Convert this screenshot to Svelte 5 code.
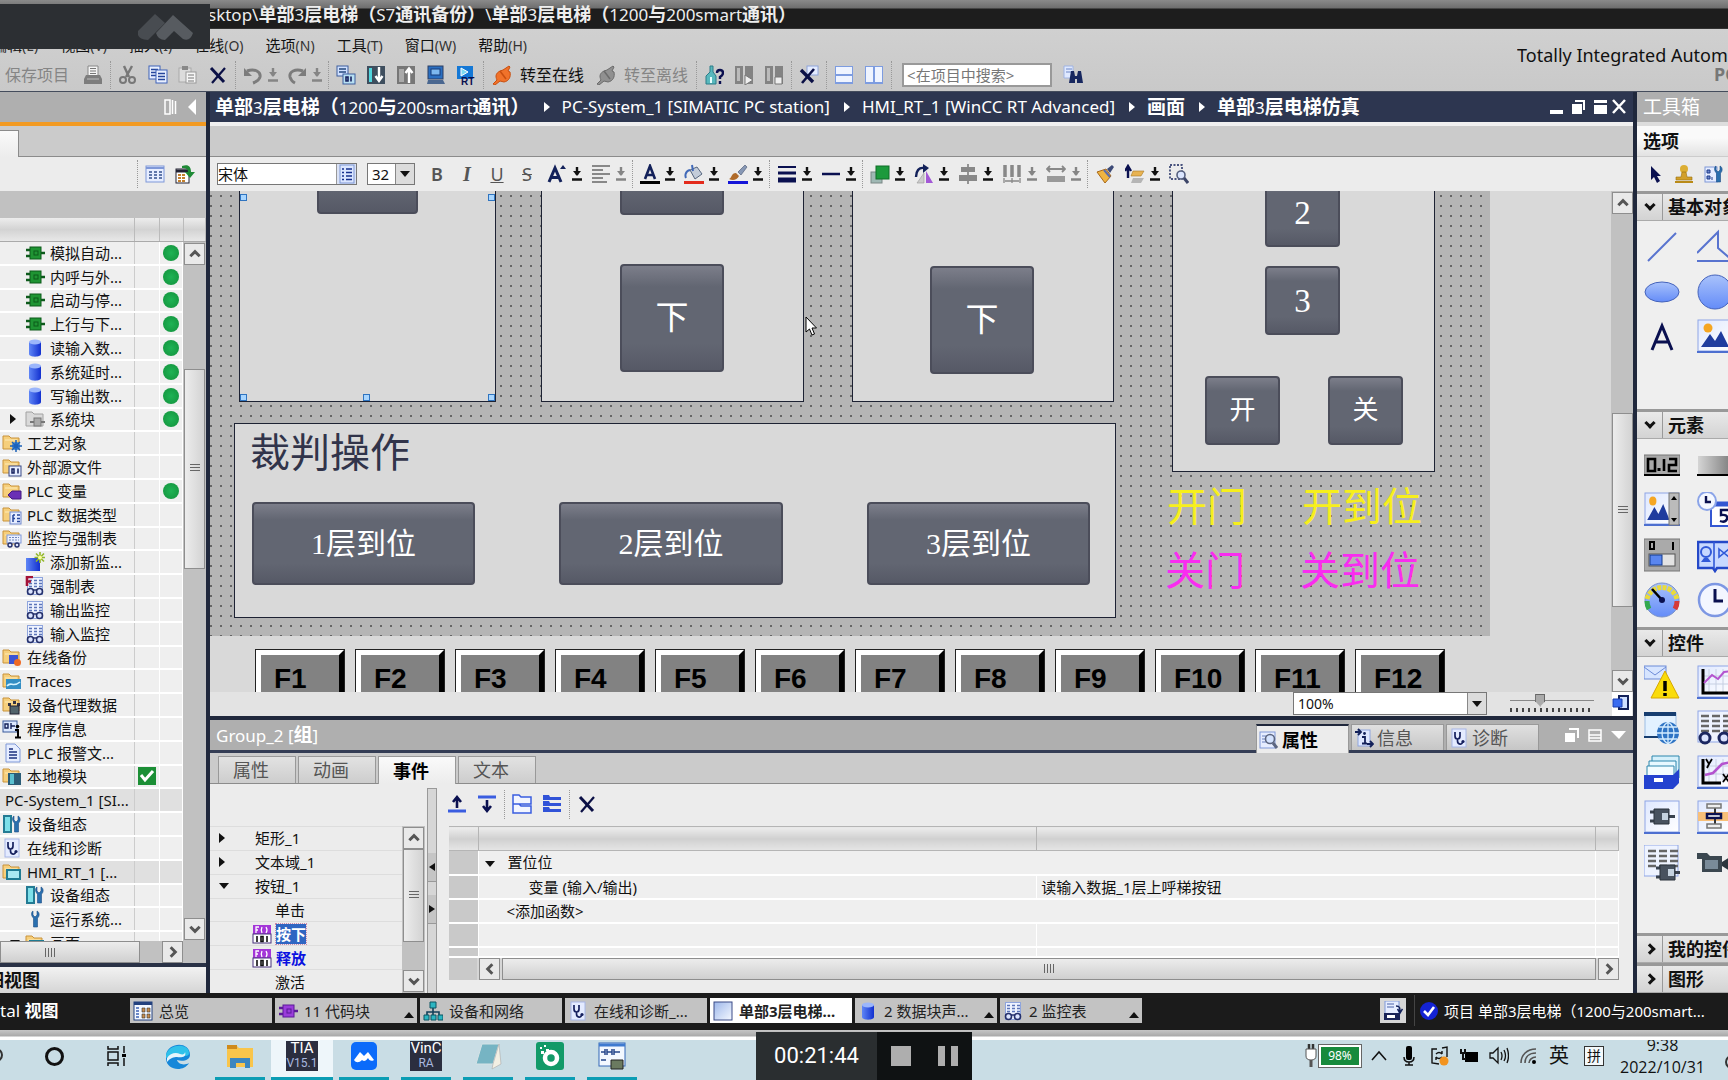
<script lang="ts">
  const folder = '<path d="M1 3h6l2 2h8v11H1z" fill="#f6cf7c" stroke="#c9933a"/><path d="M3 7h12" stroke="#fdebb8"/>';
  const sheet = '<rect x="2.5" y="1.5" width="15" height="17" fill="#eef3ff" stroke="#8fa5dd"/>';
  const glasses = '<path d="M2 14h16" stroke="#25306b" stroke-width="1.5"/><g fill="#dbe4ff" stroke="#25306b" stroke-width="1.6"><circle cx="5.5" cy="15.5" r="3"/><circle cx="14.5" cy="15.5" r="3"/></g>';
  const gridLines = '<path d="M4 4.5h3m2 0h3m2 0h3M4 7.5h3m2 0h3m2 0h3M4 10.5h3m2 0h3m2 0h3" stroke="#5b74b8" stroke-width="1.5"/>';
  const wrench = '<path d="M12 2v4l2 2 2-2V2c2.500 1 3 5 .5 7v9h-4V9C10 7 10 3 12 2z" fill="#2a6fae" stroke="#1d4e86" stroke-width=".6"/>';
  const stetho = '<rect x="3" y="1" width="14" height="18" fill="#e4ebff" stroke="#a7b6e6"/><path d="M6 4v4c0 4 5 4 5 0V4M8.500 11v2c0 4 5 4 5 1" fill="none" stroke="#16205e" stroke-width="1.7"/><circle cx="14" cy="13.500" r="1.600" fill="#16205e"/>';
  const db = '<path d="M4 4v12c0 3.500 12 3.500 12 0V4z" fill="url(#blue)"/><ellipse cx="10" cy="4" rx="6" ry="2.600" fill="#9bb6fb"/>';
  const chip = (a: string, b: string) => `<path d="M1 7h4M1 13h4M15 10h5" stroke="${b}" stroke-width="2.500"/><rect x="5" y="4" width="11" height="12" fill="${a}" stroke="${b}"/><rect x="9" y="8" width="4" height="4" fill="${a}" stroke="${b}"/>`;
  const pageI = (x: number, y: number) => `<rect x="${x}" y="${y}" width="11" height="13" fill="#e9f0ff" stroke="#3f62b8"/><path d="M${x + 2} ${y + 3.500}h7M${x + 2} ${y + 6.500}h7M${x + 2} ${y + 9.500}h7" stroke="#26469c" stroke-width="1.300"/>`;
  const plug = (a: string, b: string) => `<path d="M1 19l4-4c-2-4-1-7 3-9l3-1 6-4 1 1-2 4 2 1c1 5-1 9-6 10l-4-1-5 4z" fill="${a}" stroke="${b}"/><path d="M8 6l6 8" stroke="${b}" stroke-width="1.500"/>`;

  const icons: Record<string, string> = {
    print: '<path d="M5 1h10v10H5z" fill="#f4f4f4" stroke="#888"/><path d="M7 3.500h6M7 6h6M7 8.500h6" stroke="#777"/><path d="M3 10h14l2 4v5H1v-5z" fill="#7d7d7d"/><path d="M4 14h12" stroke="#bbb"/>',
    cut: '<path d="M6 1l5 11M14 1L8 12" stroke="#777" stroke-width="2.400"/><g fill="none" stroke="#777" stroke-width="2"><circle cx="5" cy="15" r="3"/><circle cx="14" cy="15" r="3"/></g>',
    copy: pageI(1, 1) + pageI(8, 5),
    paste: '<rect x="1" y="3" width="12" height="14" fill="#dcdcdc" stroke="#aaa"/><rect x="4" y="1" width="6" height="4" fill="#888"/><rect x="8" y="7" width="10" height="11" fill="#f6f6f6" stroke="#999"/><path d="M10 10h6M10 13h6M10 16h6" stroke="#777"/>',
    x: '<path d="M3 3l13 14" stroke="#0a0f45" stroke-width="3"/><path d="M17 3L4 18" stroke="#0a0f45" stroke-width="2.200"/>',
    undo: '<path d="M4 6c8-3 14 1 13 6-1 4-4 5-7 6" fill="none" stroke="#7c7c7c" stroke-width="3"/><path d="M1 3v8h8z" fill="#7c7c7c"/>',
    redo: '<path d="M16 6C8 3 2 7 3 12c1 4 3 5 5 6" fill="none" stroke="#7c7c7c" stroke-width="3"/><path d="M19 3v8h-8z" fill="#7c7c7c"/>',
    compile: '<rect x="1" y="1" width="11" height="10" fill="#cfe0ff" stroke="#3e5f9e"/><path d="M3 4h7M3 7h7" stroke="#24477e" stroke-width="1.500"/><rect x="7" y="9" width="12" height="10" fill="#b7dff2" stroke="#3e5f9e"/><path d="M10 12v4h2v-4zM15 11.500v5" fill="none" stroke="#16205e" stroke-width="1.600"/>',
    download: '<rect x="1" y="1" width="18" height="18" fill="#3e4e5e"/><path d="M3 3h3v14H3z" fill="#52d6de"/><path d="M13 2v13M9.500 11l3.500 5 3.500-5" fill="none" stroke="#fff" stroke-width="2.400"/>',
    upload: '<rect x="1" y="1" width="18" height="18" fill="#777"/><path d="M3 4h5v13H3z" fill="#aaa"/><path d="M13 18V5M9.500 8L13 3.500 16.500 8" fill="none" stroke="#fff" stroke-width="2.400"/>',
    pc: '<rect x="2" y="1" width="15" height="13" fill="#2a6fc1" stroke="#2c3f63"/><rect x="5" y="4" width="9" height="6" fill="#7db8ef" stroke="#173a78"/><path d="M2 15h15l2 4H1z" fill="#4a6790"/>',
    rt: '<rect x="1" y="1" width="16" height="13" fill="#1478d6"/><path d="M5 3l7 4-7 4z" fill="#7cd9f0" stroke="#fff"/><text x="5" y="19.500" font-family="Liberation Sans" font-size="10" font-weight="700" fill="#0b1050">RT</text>',
    online: plug('#f0722a', '#c84f10'),
    offline: plug('#909090', '#6b6b6b'),
    access: '<path d="M6 1h3v6l3 4v8H2v-8l4-4z" fill="#58b8bd" stroke="#2c7c88"/><path d="M7 12v6" stroke="#e6ffff" stroke-width="2"/><path d="M13 8q0-3 3-3 3 0 3 3 0 2-3 4v2M16 16v3" fill="none" stroke="#0b1050" stroke-width="2.400"/>',
    start: '<path d="M1 1h8v18H1zM11 1h8v18h-8z" fill="#838383"/><path d="M3 3h3v13H3z" fill="#bbb"/><path d="M11 10l8 5-8 5z" fill="#eee" stroke="#777"/>',
    stop: '<path d="M1 1h8v18H1zM11 1h8v18h-8z" fill="#838383"/><path d="M3 3h3v13H3z" fill="#bbb"/><path d="M11 12h7v7h-7z" fill="#eee" stroke="#777"/>',
    cross: '<rect x="8" y="1" width="11" height="9" fill="#e3ebff" stroke="#8ea4da"/><path d="M2 5l12 12" stroke="#0a0f45" stroke-width="3.400"/><path d="M15 4L3 18" stroke="#0a0f45" stroke-width="2.600"/>',
    splitH: '<rect x="1" y="1" width="18" height="18" fill="#7d9ce0"/><path d="M2 2h16v7H2zM2 11h16v6H2z" fill="#eff4ff"/>',
    splitV: '<rect x="1" y="1" width="18" height="18" fill="#7d9ce0"/><path d="M2 2h7v15H2zM11 2h7v15h-7z" fill="#eff4ff"/>',
    find: '<path d="M1 1h9v12H1z" fill="#dfe9ff" stroke="#9fb3e2"/><path d="M3 4h6M3 7h5" stroke="#6c86c6"/><path d="M8 6h3l1 5h2l1-5h3l2 12h-6v-4h-2v4H6z" fill="#17275f"/>',
    A: '<path d="M5 15L10 2l5 13M6.500 11h7" fill="none" stroke="#13215a" stroke-width="2.600"/><path d="M0 17h20v3H0z" fill="#000"/>',
    Aup: '<path d="M2 18L8 4l6 14M4 13.500h8" fill="none" stroke="#13215a" stroke-width="3"/><path d="M13 5h6l-3-4z" fill="#13215a"/>',
    align: '<path d="M1 2h18M1 6h11M1 10h18M1 14h11M1 18h15" stroke="#888" stroke-width="2"/>',
    bucket: '<path d="M6 6l7-3 5 7-7 5z" fill="#c3ccd9" stroke="#56667f"/><path d="M9 7L8 1M6 6c-5 1-5 6-4 8" fill="none" stroke="#4169b8" stroke-width="2"/><path d="M0 17h20v3H0z" fill="#e32b1c"/>',
    pen: '<path d="M10 8l7-7 2 2-6 8z" fill="#8798b5" stroke="#44536f" stroke-width=".6"/><path d="M1 15c3-1 2-6 7-6l3 3c-2 4-6 5-10 3z" fill="#b06b2a"/><path d="M0 17h20v3H0z" fill="#1515d8"/>',
    lines: '<path d="M1 3h18" stroke="#0a1050" stroke-width="2"/><path d="M1 9h18" stroke="#0a1050" stroke-width="3"/><path d="M1 16h18" stroke="#0a1050" stroke-width="5"/>',
    dash: '<path d="M1 10h18" stroke="#0a1050" stroke-width="2.500"/>',
    order: '<rect x="1" y="8" width="11" height="11" fill="#9fb8b4" stroke="#7a8886"/><rect x="6" y="2" width="13" height="13" fill="#1c9a3c" stroke="#0f6c27"/>',
    rotate: '<path d="M2 13C2 7 5 3 10 4" fill="none" stroke="#13215a" stroke-width="2.400"/><path d="M9 0l6 4-6 5z" fill="#13215a"/><path d="M12 7l7 12h-7z" fill="#a358d6"/><path d="M10 9v10H3z" fill="#ccc" stroke="#999" stroke-width=".6"/>',
    center: '<path d="M10 0v20" stroke="#777" stroke-width="1.500"/><rect x="3" y="3" width="14" height="5" fill="#888"/><rect x="1" y="11" width="18" height="6" fill="#888"/>',
    spread: '<path d="M3 1v12M10 1v12M17 1v12" stroke="#888" stroke-width="3.500"/><path d="M2 14v5M10 14v5M18 14v5M3 17h14" stroke="#888" stroke-width="1.300"/>',
    width: '<path d="M1 5h18M4 2L1 5l3 3M16 2l3 3-3 3" fill="none" stroke="#888" stroke-width="1.800"/><rect x="1" y="12" width="18" height="6" fill="#999"/>',
    brush: '<path d="M12 5l5-4 2 2-4 6z" fill="#3c4a77"/><path d="M2 8l9-3 5 7-6 7z" fill="#efb441" stroke="#a8681a"/><path d="M9 6l6 7" stroke="#5a6dac" stroke-width="2"/>',
    layers: '<path d="M3 14V4M0 7l3-5 3 5" fill="none" stroke="#0a1050" stroke-width="2.400"/><path d="M8 7h11l-3 5H6z" fill="#e8b352" stroke="#a77a28" stroke-width=".6"/><path d="M8 14h11l-3 5H6z" fill="#b5b5b5"/>',
    zoom: '<path d="M1 1h12v14H1z" fill="none" stroke="#13215a" stroke-dasharray="2 1.500" stroke-width="1.400"/><circle cx="12" cy="11" r="4" fill="#dbe6ff" stroke="#56607f" stroke-width="1.600"/><path d="M15 14l4 5" stroke="#3c4568" stroke-width="3"/>',
    list: '<rect x="3" y="1" width="14" height="18" fill="#dbe6ff" stroke="#7e97d4"/><path d="M5 5h2m2 0h6M5 8.500h2m2 0h6M5 12h2m2 0h6M5 15.500h2m2 0h6" stroke="#16308e" stroke-width="1.500"/>',
    table: '<rect x="1" y="2" width="18" height="16" fill="#e6edff" stroke="#7f98d8"/><path d="M1 4h18" stroke="#7f98d8" stroke-width="2"/><path d="M4 8h3m2 0h3m2 0h3M4 11h3m2 0h3m2 0h3M4 14h3m2 0h3m2 0h3" stroke="#34508f" stroke-width="1.500"/>',
    export: '<rect x="1" y="5" width="13" height="14" fill="#fff" stroke="#223"/><path d="M1 7h13" stroke="#223" stroke-width="3"/><path d="M3 11h3m1 0h3M3 14h3m1 0h3M3 17h3m1 0h3" stroke="#c4802c" stroke-width="1.800"/><path d="M7 2c6-2 9 0 9 6h4l-5 6-5-6h3c0-3-2-4-6-4z" fill="#1f8a36"/>',
    fb: chip('#1f9433', '#0c5a1b'),
    purple: chip('#9a3ddb', '#5a1b98'),
    db,
    sysblk: '<path d="M1 3h6l2 2h9v12H1z" fill="#d9d9d9" stroke="#a2a2a2"/><path d="M5 13h4M15 13h5" stroke="#777" stroke-width="2"/><rect x="9" y="9" width="7" height="8" fill="#aaa" stroke="#777"/>',
    tech: folder + '<circle cx="14" cy="13" r="4" fill="#3e8ee6"/><path d="M14 7v12M8 13h12M10 9l8 8M18 9l-8 8" stroke="#1d62b8" stroke-width="1.500"/>',
    ext: folder + '<rect x="7" y="9" width="12" height="10" fill="#e6edff" stroke="#3a4a86"/><path d="M10 12v4h2v-4zM16 11.500v5" fill="none" stroke="#16205e" stroke-width="1.500"/>',
    tag: folder + '<path d="M6 14l4-4h9v8h-9z" fill="#6a2fb5" stroke="#43187e"/>',
    types: folder + '<rect x="8" y="7" width="11" height="12" fill="#e6edff" stroke="#6f87cc"/><path d="M11 10v7M11 10h2M11 13.500h2M15 10h3M15 13.500h3M15 16.500h3" stroke="#26469c" stroke-width="1.500"/>',
    watch: folder + '<rect x="5" y="7" width="14" height="8" fill="#e9f0ff" stroke="#7f98d8"/><path d="M7 9.500h10M7 12h10" stroke="#7187bd" stroke-dasharray="2 1"/><g fill="#dbe4ff" stroke="#25306b" stroke-width="1.400"><circle cx="8" cy="17" r="2"/><circle cx="15" cy="17" r="2"/></g>',
    add: '<rect x="1" y="6" width="14" height="13" fill="url(#blue)"/><path d="M15 0v11M9.500 5.500h11M11 1.500l8 8M19 1.500l-8 8" stroke="#93b72a" stroke-width="1.600"/><circle cx="15" cy="5.500" r="2" fill="#fbff9c"/>',
    force: sheet + gridLines + '<path d="M2 10V1h6M2 5.500h4" fill="none" stroke="#a31237" stroke-width="2.600"/>' + glasses,
    wtable: sheet + gridLines + glasses,
    backup: folder + '<rect x="7" y="8" width="9" height="9" fill="#3d55d4"/><circle cx="15.500" cy="15.500" r="3.500" fill="#ef6a24"/>',
    traces: folder + '<rect x="4" y="8" width="15" height="10" fill="#338ec4"/><path d="M5 15c4-5 6 2 13-4" fill="none" stroke="#d5f3ff" stroke-width="1.600"/>',
    proxy: folder + '<path d="M6 8h3v3H6zM11 6h3v3h-3zM15 8h3v3h-3z" fill="#334"/><rect x="8" y="11" width="9" height="8" fill="#52646c" stroke="#223"/>',
    info: '<rect x="1" y="2" width="14" height="11" fill="#dbe8ff" stroke="#3a5a9b"/><path d="M3 5h3v4H3zM9 4v6M9 7h4" fill="none" stroke="#13215a" stroke-width="1.400"/><path d="M13 11h3v7M13 18.500h6" fill="none" stroke="#000" stroke-width="2"/><circle cx="15.500" cy="7.500" r="1.800"/>',
    alarm: '<path d="M4 1h9l5 5v13H4z" fill="#e6edff" stroke="#7f98d8"/><path d="M7 6h4M7 9h8M7 12h8M7 15h8" stroke="#1c3180" stroke-width="1.600"/>',
    module: folder + '<path d="M6 7h13v12H6z" fill="#2b5d77"/><path d="M8 8h4v10H8z" fill="#5ac0cf"/>',
    config: '<path d="M1 1h9v18H1z" fill="#247b94"/><path d="M3 3h5v14H3z" fill="#7ee0ea"/>' + wrench,
    wrench: '<g transform="translate(-4 0)">' + wrench + '</g>',
    stetho,
    hmi: folder + '<rect x="4" y="7" width="15" height="11" fill="#1f7b93"/><rect x="6" y="9" width="11" height="7" fill="#a9e9f2"/>',
    over: '<rect x="1" y="1" width="18" height="18" fill="#f4f8ff" stroke="#23417e"/><path d="M1 2.500h18" stroke="#23417e" stroke-width="3"/><path d="M3 7h3M3 10h3M3 13h3M3 16h3" stroke="#3c61b5" stroke-width="1.500"/><path d="M9 7h3v4H9zM14 7h3v4h-3zM9 13h3v4H9zM14 13h3v4h-3z" fill="#c98d4c" stroke="#333" stroke-width=".6"/>',
    net: '<path d="M10 6v5M4 15v-4h12v4M10 11v4" fill="none" stroke="#13405a" stroke-width="1.600"/><path d="M7 1h6v6H7zM1 14h5v5H1zM8 14h5v5H8zM15 14h5v5h-5z" fill="#2bb5c1" stroke="#0d5563"/>',
    screen: '<rect x="1" y="1" width="18" height="18" fill="url(#pale)" stroke="#3a4a86"/>',
    save: '<rect x="2" y="0" width="14" height="14" fill="#e6edff" stroke="#7f98d8"/><path d="M4 3h7M4 6h7" stroke="#4a62a8"/><path d="M13 5c4 0 4 2 4 6M14.500 8l2.500 4 2.500-4" fill="none" stroke="#13215a" stroke-width="1.500"/><path d="M1 12h16v7H1z" fill="#1a2458"/><path d="M4 14h8v3H4z" fill="#fff"/>',
    ok: '<circle cx="10" cy="10" r="9" fill="#1423d4"/><path d="M5 10l4 4 6-8" fill="none" stroke="#fff" stroke-width="2.600"/>',
    tick: '<rect x="1" y="1" width="18" height="18" fill="#1c8f36"/><path d="M4 9l4 5 8-9" fill="none" stroke="#fff" stroke-width="3"/>',
    fn: '<rect x="1" y="1" width="18" height="9" fill="#a436d8"/><rect x="1" y="10" width="18" height="9" fill="#fff" stroke="#47307c"/><path d="M4 9V3h3M4 6h2M10 3q-1.500 3 0 6M14 3q2 3 0 6" fill="none" stroke="#fff" stroke-width="1.300"/><path d="M5 12v6M9 12.500h2v5H9zM15 12v6" fill="none" stroke="#111" stroke-width="1.600"/>',
    up: '<path d="M1 17h18" stroke="#3a5de0" stroke-width="3"/><path d="M10 14V4M6 8l4-5 4 5" fill="none" stroke="#0a1050" stroke-width="2.600"/>',
    down: '<path d="M1 3h18" stroke="#3a5de0" stroke-width="3"/><path d="M10 6v10M6 12l4 5 4-5" fill="none" stroke="#0a1050" stroke-width="2.600"/>',
    expand: '<path d="M1 1h6l2 2h10v7H1zM1 10h6l2 2h10v7H1z" fill="#f2f5ff" stroke="#3a5de0" stroke-width="1.500"/>',
    collapse: '<path d="M1 1h6l1 2h11v3H1zM1 7h6l1 2h11v3H1zM1 13h6l1 2h11v3H1z" fill="#3153d8"/>',
    props: '<rect x="1" y="2" width="15" height="16" fill="#e6edff" stroke="#7f98d8"/><path d="M3 6h4M3 9h4M3 12h4" stroke="#6880be"/><circle cx="11" cy="9" r="4.500" fill="#d5e4ff" stroke="#5c6680" stroke-width="1.600"/><path d="M14 13l4 5" stroke="#5c6680" stroke-width="3"/>',
    infoTab: '<rect x="4" y="2" width="12" height="16" fill="#dfe8ff" stroke="#8fa5dd"/><path d="M1 4h5M4 1l3 3-3 3M13 16h5M16 13l3 3-3 3M8 9h3v6M8 15.500h5" fill="none" stroke="#13215a" stroke-width="1.800"/><circle cx="10.500" cy="5.500" r="1.400" fill="#13215a"/>',
    cursor: '<path d="M7 2v14l3-3 3 6 3-2-3-5h4z" fill="#0a1050"/>',
    stamp: '<circle cx="10" cy="5" r="4" fill="#dcae33"/><path d="M8 8h4l1 5h5v3H2v-3h5z" fill="#d2a02a" stroke="#99700f" stroke-width=".6"/><path d="M1 18h18" stroke="#b98a17" stroke-width="2"/>',
    options: '<rect x="1" y="3" width="12" height="15" fill="#e6edff" stroke="#7f98d8"/><path d="M3 6h3v3H3zM3 12h3v3H3zM8 13v3" stroke="#1d3b8a" fill="#6f87cc"/>' + wrench
  };

  const frame = '<rect x="1" y="1" width="34" height="31" fill="url(#pale2)" stroke="#8fa6e6"/><path d="M0 33h36" stroke="#4d6fd0" stroke-width="2"/>';
  const plugBig = '<path d="M6 13h5M6 22h5M25 17.500h6" stroke="#39424e" stroke-width="3"/><path d="M10 10h15v15H10z" fill="#48525f" stroke="#2b333d"/><path d="M18 14h6v7h-6z" fill="#c5d2df"/>';
  const grid9 = '<path d="M4 6h8m3 0h8m3 0h8M4 11h8m3 0h8m3 0h8M4 16h8m3 0h8m3 0h8M4 21h8m3 0h8m3 0h8" stroke="#666" stroke-width="2.500"/>';
  const mountains = '<circle cx="11" cy="9" r="4.500" fill="#f5a623"/><path d="M4 28l9-13 5 7 6-10 8 16z" fill="#1f3c9e"/>';
  const big: Record<string, string> = {
    line: '<path d="M4 32L32 4" stroke="#5873cf" stroke-width="2"/>',
    poly: '<path d="M0 24L21 3v16l15 13H0" fill="none" stroke="#5873cf" stroke-width="2"/>',
    ellipse: '<ellipse cx="18" cy="18" rx="17" ry="10" fill="url(#sky)" stroke="#4563bb"/>',
    circle: '<circle cx="18" cy="18" r="17" fill="url(#sky)" stroke="#4563bb"/>',
    text: '<path d="M8 31L18 7l10 24M12 23h12" fill="none" stroke="#0a1050" stroke-width="3"/>',
    image: frame + mountains,
    io: '<rect x="0" y="8" width="36" height="20" fill="#a9a9a9" stroke="#777"/><path d="M0 28h36" stroke="#000" stroke-width="2"/><path d="M4 12h7v12H4zM20 12v12M25 12h7v6h-7v6h8" fill="none" stroke="#000" stroke-width="2.600"/><path d="M15 24v-3" stroke="#000" stroke-width="3"/>',
    button: '<rect x="1" y="9" width="36" height="18" fill="url(#steel)"/><path d="M0 28h36" stroke="#000" stroke-width="2"/>',
    symio: frame + '<g transform="scale(.8 1)">' + mountains + '</g><rect x="25" y="1" width="10" height="32" fill="#bbb" stroke="#777"/><path d="M27 8h6l-3-4zM27 26h6l-3 4z" fill="#000"/>',
    datetime: '<rect x="14" y="11" width="23" height="23" fill="#fff" stroke="#3457d2" stroke-width="2"/><path d="M14 12h23" stroke="#3457d2" stroke-width="5"/><circle cx="10" cy="9" r="9" fill="#f5f8ff" stroke="#8ba4e8" stroke-width="2"/><path d="M9 4v6h5M31 18h-7v5q7-1 6 4-2 4-7 2" fill="none" stroke="#0a1050" stroke-width="2.400"/>',
    switch: '<rect x="0" y="2" width="36" height="32" fill="#aaa" stroke="#777"/><path d="M6 5h4v7H6zM29 5v8" fill="none" stroke="#000" stroke-width="2"/><rect x="5" y="17" width="26" height="12" fill="#e3e3e3" stroke="#555"/><rect x="6" y="18" width="12" height="10" fill="#5a86ef" stroke="#123a8e"/>',
    library: '<path d="M1 5h34v26H20l-2 3-2-3H1z" fill="#c7d8ff" stroke="#2448c8" stroke-width="2.500"/><path d="M17 5v26M22 12l10 8v-8l-10 8z" fill="none" stroke="#3159d8" stroke-width="1.600"/><circle cx="9" cy="15" r="5" fill="none" stroke="#3159d8" stroke-width="2"/><path d="M4 25l3-4h4l3 4z" fill="#3159d8"/>',
    gauge: '<circle cx="18" cy="18" r="17" fill="url(#sky)" stroke="#7b93c9"/><g fill="none" stroke-width="5"><path d="M5 27A15.500 15.500 0 0 1 3 19" stroke="#33a94e"/><path d="M3 17A15.500 15.500 0 0 1 33 17" stroke="#eadb3a" stroke-dasharray="4 1.200"/><path d="M33 19a15 15 0 0 1-2 8" stroke="#d53a3a"/></g><path d="M8 7l10 11" stroke="#000" stroke-width="2.600"/><circle cx="18" cy="18" r="3" fill="#0a1050"/>',
    clock: '<circle cx="18" cy="18" r="16" fill="#f3f6ff" stroke="#7d97e3" stroke-width="2.500"/><path d="M18 7v12h8" fill="none" stroke="#0a1050" stroke-width="3"/>',
    warn: '<rect x="0" y="1" width="22" height="13" fill="#d7e5ff" stroke="#6d8bd7"/><path d="M0 2l11 8 11-8" fill="none" stroke="#6d8bd7"/><path d="M21 6l14 27H7z" fill="#fadc0a" stroke="#d8a800"/><path d="M21 16v10M21 28v3" stroke="#000" stroke-width="3.500"/>',
    trend: frame + '<path d="M12 4v24M19 4v24M26 4v24M6 11h28M6 19h28" stroke="#c6cfe2"/><path d="M6 4v24h30" fill="none" stroke="#000" stroke-width="3"/><path d="M7 18l8-8 6 4 6-7 8-1" fill="none" stroke="#b454cf" stroke-width="2"/>',
    web: '<rect x="1" y="3" width="31" height="24" fill="#e2f1ff" stroke="#9bbde4"/><path d="M0 2h32v4H0z" fill="#173e70"/><path d="M0 27h14" stroke="#173e70" stroke-width="2"/><circle cx="24" cy="23" r="11" fill="#2f74c4"/><path d="M13 23h22M24 12v22M15 17h18M15 29h18M24 12c-8 5-8 17 0 22M24 12c8 5 8 17 0 22" fill="none" stroke="#d5edff" stroke-width="1.300"/>',
    watchtab: '<rect x="1" y="1" width="34" height="31" fill="#eef3ff" stroke="#8fa6e6"/>' + grid9 + '<g fill="#dbe4ff" stroke="#1b2760" stroke-width="3"><circle cx="8" cy="28" r="5"/><circle cx="27" cy="28" r="5"/></g>',
    recipe: '<path d="M8 1h27v22H8z" fill="#d5f0fb" stroke="#2c86ad"/><path d="M5 6h27v18H5z" fill="#e7f8ff" stroke="#2c86ad"/><path d="M3 11h27v14H3z" fill="#f2fcff" stroke="#2c86ad"/><path d="M0 20h29l6-6v14l-6 6H0z" fill="#2342cf"/><path d="M10 23h9v4h-9z" fill="#fff"/>',
    xy: frame + '<path d="M12 4v24M19 4v24M26 4v24M6 11h28M6 19h28" stroke="#c6cfe2"/><path d="M6 4v24h18" fill="none" stroke="#000" stroke-width="3"/><path d="M9 4l3 5 3-5M12 9l-2 4M26 19l6 8M32 19l-6 8" fill="none" stroke="#000" stroke-width="1.800"/><path d="M8 20l8-2 9-9 10-2" fill="none" stroke="#b454cf" stroke-width="2.500"/>',
    plc: frame + '<g transform="translate(0 -1)">' + plugBig + '</g>',
    diag: frame + '<path d="M1 12h34v9H1z" fill="#f8bf78"/><path d="M18 6v22" stroke="#333" stroke-width="2"/><path d="M10 4h14v4H10zM10 24h14v4H10z" fill="#eee" stroke="#777" stroke-width="1.500"/><path d="M10 14h14v4H10z" fill="#fff" stroke="#0a1050" stroke-width="2.500"/>',
    sysdiag: '<rect x="0" y="0" width="34" height="31" fill="#eef3ff" stroke="#8fa6e6"/>' + grid9 + '<g transform="translate(6 10)">' + plugBig + '</g>',
    camera: '<path d="M0 8h10l3 3h12v16H5V14H0z" fill="#3b4750"/><path d="M8 15h13v9H8z" fill="#7a8b99"/><path d="M25 17l11-7v18l-11-7z" fill="#2b353d"/>'
  };

  type Tool = { n?: string; pm?: boolean; off?: boolean; label?: string; sep?: boolean; l?: string };
  const sep: Tool = { sep: true };
  const tools: Tool[] = [
    { label: '保存项目', off: true }, { n: 'print', l: '打印' }, sep, { n: 'cut', l: '剪切' }, { n: 'copy', l: '复制' }, { n: 'paste', l: '粘贴' }, { n: 'x', l: '删除' }, sep,
    { n: 'undo', pm: true, off: true, l: '撤销' }, { n: 'redo', pm: true, off: true, l: '重做' }, sep,
    { n: 'compile', l: '编译' }, { n: 'download', l: '下载' }, { n: 'upload', l: '上传' }, { n: 'pc', l: '仿真' }, { n: 'rt', l: '运行系统' }, sep,
    { n: 'online', label: '转至在线' }, { n: 'offline', label: '转至离线', off: true }, sep,
    { n: 'access', l: '可访问设备' }, { n: 'start', l: '启动' }, { n: 'stop', l: '停止' }, sep, { n: 'cross', l: '交叉引用' }, sep, { n: 'splitH', l: '水平拆分' }, { n: 'splitV', l: '垂直拆分' }, sep
  ];
  const format: Tool[] = [
    { n: 'Aup', pm: true }, { n: 'align', pm: true, off: true }, sep,
    { n: 'A', pm: true }, { n: 'bucket', pm: true }, { n: 'pen', pm: true }, sep,
    { n: 'lines', pm: true }, { n: 'dash', pm: true }, sep,
    { n: 'order', pm: true }, { n: 'rotate', pm: true }, { n: 'center', pm: true }, { n: 'spread', pm: true, off: true }, { n: 'width', pm: true, off: true }, sep,
    { n: 'brush' }, { n: 'layers', pm: true }, { n: 'zoom' }
  ];
  const menus = ['编辑(E)', '视图(V)', '插入(I)', '在线(O)', '选项(N)', '工具(T)', '窗口(W)', '帮助(H)'];
  const crumbs = ['单部3层电梯（1200与200smart通讯）', 'PC-System_1 [SIMATIC PC station]', 'HMI_RT_1 [WinCC RT Advanced]', '画面', '单部3层电梯仿真'];

  type Row = { t: string; i?: string; in?: boolean; dot?: boolean; tick?: boolean; grp?: boolean; a?: string };
  const rows: Row[] = [
    { t: '模拟自动...', i: 'fb', in: true, dot: true }, { t: '内呼与外...', i: 'fb', in: true, dot: true },
    { t: '启动与停...', i: 'fb', in: true, dot: true }, { t: '上行与下...', i: 'fb', in: true, dot: true },
    { t: '读输入数...', i: 'db', in: true, dot: true }, { t: '系统延时...', i: 'db', in: true, dot: true },
    { t: '写输出数...', i: 'db', in: true, dot: true }, { t: '系统块', i: 'sysblk', in: true, dot: true, a: 'right' },
    { t: '工艺对象', i: 'tech' }, { t: '外部源文件', i: 'ext' }, { t: 'PLC 变量', i: 'tag', dot: true },
    { t: 'PLC 数据类型', i: 'types' }, { t: '监控与强制表', i: 'watch' }, { t: '添加新监...', i: 'add', in: true },
    { t: '强制表', i: 'force', in: true }, { t: '输出监控', i: 'wtable', in: true }, { t: '输入监控', i: 'wtable', in: true },
    { t: '在线备份', i: 'backup' }, { t: 'Traces', i: 'traces' }, { t: '设备代理数据', i: 'proxy' }, { t: '程序信息', i: 'info' },
    { t: 'PLC 报警文...', i: 'alarm' }, { t: '本地模块', i: 'module', tick: true }, { t: 'PC-System_1 [SI...', grp: true },
    { t: '设备组态', i: 'config' }, { t: '在线和诊断', i: 'stetho' }, { t: 'HMI_RT_1 [...', i: 'hmi', grp: true },
    { t: '设备组态', i: 'config', in: true }, { t: '运行系统...', i: 'wrench', in: true }, { t: '画面', i: 'hmi', in: true, a: 'down' }
  ];

  const panels = [[29, -60, 257, 271], [331, -60, 263, 271], [642, -60, 262, 271], [962, -60, 263, 341], [24, 232, 882, 195]];
  const keys: [string, number, number, number, number, string][] = [
    ['', 107, -80, 101, 103, ''], ['', 410, -80, 104, 104, ''], ['下', 410, 73, 104, 108, 'xl'], ['下', 720, 75, 104, 108, 'xl'],
    ['2', 1055, -13, 75, 69, 'lg'], ['3', 1055, 75, 75, 69, 'lg'], ['开', 995, 185, 75, 69, 'sm'], ['关', 1118, 185, 75, 69, 'sm'],
    ['1层到位', 42, 311, 223, 83, 'md'], ['2层到位', 349, 311, 224, 83, 'md'], ['3层到位', 657, 311, 223, 83, 'md']
  ];
  const labels: [string, number, number, string][] = [
    ['裁判操作', 40, 235, 'ink'], ['开门', 957, 289, 'yellow'], ['开到位', 1092, 289, 'yellow'], ['关门', 955, 353, 'pink'], ['关到位', 1090, 353, 'pink']
  ];
  const handles = [[30, 3], [278, 3], [30, 203], [153, 203], [278, 203]];
  const fkeys = Array.from({ length: 12 }, (_, i) => 'F' + (i + 1));

  const events = [
    { t: '矩形_1', a: 'right' }, { t: '文本域_1', a: 'right' }, { t: '按钮_1', a: 'down' }, { t: '单击', sub: true },
    { t: '按下', sub: true, fn: true, sel: true }, { t: '释放', sub: true, fn: true, hot: true }, { t: '激活', sub: true }
  ];
  const sections = [
    { t: '基本对象', c: 'basic', items: ['line', 'poly', 'ellipse', 'circle', 'text', 'image'] },
    { t: '元素', c: 'elem', items: ['io', 'button', 'symio', 'datetime', 'switch', 'library', 'gauge', 'clock'] },
    { t: '控件', c: 'ctrl', items: ['warn', 'trend', 'web', 'watchtab', 'recipe', 'xy', 'plc', 'diag', 'sysdiag', 'camera'] }
  ];
  const windows = [
    { t: '总览', i: 'over' }, { t: '11 代码块', i: 'purple', m: true }, { t: '设备和网络', i: 'net' }, { t: '在线和诊断_...', i: 'stetho' },
    { t: '单部3层电梯...', i: 'screen', on: true }, { t: '2 数据块声...', i: 'db', m: true }, { t: '2 监控表', i: 'wtable', m: true }
  ];
  const runs = (s: string) => s.match(/[\u3000-\u9fff\uff00-\uffef]+|[^\u3000-\u9fff\uff00-\uffef]+/g) ?? [];
  const isHan = (s: string) => /[\u4e00-\u9fff]/.test(s);
</script>

{#snippet ic(n: string)}<svg class="ic" viewBox="0 0 20 20" aria-hidden="true">{@html icons[n]}</svg>{/snippet}
{#snippet pm()}<svg class="pm" viewBox="0 0 10 14" aria-hidden="true"><path d="M5 0v8M0 12.500h10" stroke="currentColor" stroke-width="2.400" /><path d="M1 4h8L5 9z" fill="currentColor" /></svg>{/snippet}
{#snippet mix(s: string)}{#each runs(s) as r}{#if isHan(r)}<b>{r}</b>{:else}<span>{r}</span>{/if}{/each}{/snippet}
{#snippet chev(d: string)}<button class="sb {d}" aria-label="滚动"><svg viewBox="0 0 12 12"><path d="M2 8l4-4 4 4" /></svg></button>{/snippet}
{#snippet tool(t: Tool)}
  {#if t.sep}<i class="sep"></i>
  {:else}
    <button class="tool" class:off={t.off} class:pair={t.pm} class:wide={t.label} aria-label={t.label ?? t.l ?? t.n}>
      {#if t.n}{@render ic(t.n)}{/if}{#if t.label}<span>{t.label}</span>{/if}{#if t.pm}{@render pm()}{/if}
    </button>
  {/if}
{/snippet}

<svg class="defs" width="0" height="0" aria-hidden="true">
  <defs>
    <linearGradient id="blue"><stop stop-color="#5f86f6" /><stop offset="1" stop-color="#1230cf" /></linearGradient>
    <linearGradient id="pale" x2="1" y2="1"><stop stop-color="#9db7ea" /><stop offset="1" stop-color="#f4f8ff" /></linearGradient>
    <linearGradient id="pale2" x2="1" y2="1"><stop stop-color="#dfe8ff" /><stop offset="1" stop-color="#fff" /></linearGradient>
    <linearGradient id="sky" x2="0" y2="1"><stop stop-color="#a9c2fb" /><stop offset="1" stop-color="#648cf8" /></linearGradient>
    <linearGradient id="steel"><stop stop-color="#d5d5d5" /><stop offset="1" stop-color="#777" /></linearGradient>
  </defs>
</svg>

<div class="app">
  <header class="title">{@render mix('sktop\\单部3层电梯（S7通讯备份）\\单部3层电梯（1200与200smart通讯）')}</header>
  <div class="top">
    <div class="bars">
      <nav class="menu">{#each menus as m}<button>{m.slice(0, 2)}<small>{m.slice(2)}</small></button>{/each}</nav>
      <div class="toolbar main">
        {#each tools as t}{@render tool(t)}{/each}
        <input class="search" aria-label="搜索" placeholder="<在项目中搜索>" />
        {@render tool({ n: 'find', l: '查找' })}
      </div>
    </div>
    <div class="brand"><div>Totally Integrated Automation</div><strong>PORTAL</strong></div>
  </div>

  <div class="work">
    <aside class="side">
      <div class="phead grey"><svg class="pins" viewBox="0 0 32 16"><path d="M1 1h5v14H1zM8.500 1v14M11.500 2v13" fill="none" stroke="#fff" stroke-width="1.500" /><path d="M32 0v16l-8-8z" fill="#fff" /></svg></div>
      <div class="orange"></div>
      <div class="tabgap"><div class="ltab"></div></div>
      <div class="ltools"><i class="sep"></i><button class="tool" aria-label="列表">{@render ic('table')}</button><button class="tool" aria-label="导出">{@render ic('export')}</button></div>
      <div class="lgap"></div>
      <div class="lhead"><i></i><i></i><i></i><i></i></div>
      <div class="tree">
        <div class="view">
          <div class="rows">
            {#each rows as r}
              <div class="row" class:grp={r.grp}>
                <span class="name" class:in={r.in} class:bare={!r.i}>{#if r.a}<i class="tri {r.a}"></i>{/if}{#if r.i}{@render ic(r.i)}{/if}<span>{r.t}</span></span>
                <span class="c">{#if r.tick}{@render ic('tick')}{/if}</span>
                <span class="c">{#if r.dot}<i class="dot"></i>{/if}</span>
              </div>
            {/each}
          </div>
        </div>
        <div class="vs">{@render chev('up')}<i class="lt1"></i><i class="thumb v"></i><i class="lt3"></i>{@render chev('down')}</div>
      </div>
      <div class="hs lefths"><i class="thumb h"></i>{@render chev('right')}<i></i></div>
      <button class="detail">细视图</button>
    </aside>

    <main class="editor">
      <div class="phead navy">
        {#each crumbs as c, i}{#if i}<i class="tri right"></i>{/if}<span class="crumb">{@render mix(c)}</span>{/each}
        <svg class="wins" viewBox="0 0 76 16"><path d="M0 13h13" stroke="#fff" stroke-width="4" /><path d="M22 5h10v10H22z" fill="#fff" /><path d="M25 2h9v9" fill="none" stroke="#fff" stroke-width="2" /><path d="M44 1h13v3H44zM44 6h13v9H44z" fill="#fff" /><path d="M63 1l12 13M75 1L63 14" stroke="#fff" stroke-width="2.500" /></svg>
      </div>
      <div class="strip"></div>
      <div class="toolbar fmt">
        <div class="font"><input aria-label="字体" value="宋体" /><button aria-label="字体列表">{@render ic('list')}</button></div>
        <label class="pick size"><select aria-label="字号"><option>32</option></select><span><i class="tri down"></i></span></label>
        <button class="tool let">B</button><button class="tool let it">I</button><button class="tool let un">U</button><button class="tool let st">S</button>
        {#each format as t}{@render tool(t)}{/each}
      </div>
      <div class="stage">
        <div class="canvas">
          <div class="dots">
            {#each panels as [x, y, w, h]}<div class="panel" style="left:{x}px;top:{y}px;width:{w}px;height:{h}px"></div>{/each}
            {#each keys as [t, x, y, w, h, c]}<button class="hk {c}" aria-label={t || '上'} style="left:{x}px;top:{y}px;width:{w}px;height:{h}px">{t}</button>{/each}
            {#each labels as [t, x, y, c]}<span class="lb {c}" style="left:{x}px;top:{y}px">{t}</span>{/each}
            {#each handles as [x, y]}<i class="hd" style="left:{x}px;top:{y}px"></i>{/each}
            <svg class="mouse" viewBox="0 0 12 20"><path d="M1 1v15l3.500-3 2.500 6 2.500-1-2.500-6h4.500z" fill="#fff" stroke="#000" /></svg>
          </div>
          <div class="fkeys">{#each fkeys as f}<button>{f}</button>{/each}</div>
        </div>
        <div class="vs">{@render chev('up')}<i class="ct1"></i><i class="thumb v"></i><i class="ct3"></i>{@render chev('down')}</div>
      </div>
      <div class="zoomrow">
        <label class="pick pct"><select aria-label="缩放"><option>100%</option></select><span><i class="tri down"></i></span></label>
        <div class="slide"><input type="range" aria-label="缩放滑块" min="0" max="100" value="34" /><i></i></div>
        <button class="fit" aria-label="适应"><svg viewBox="0 0 18 18"><path d="M7 1h9v13H7z" fill="#cfe0ff" stroke="#13215a" stroke-width="2" /><path d="M1 4h9v8H1z" fill="#3a6cf0" stroke="#1a3fb0" /></svg></button>
      </div>
      <div class="phead insp">
        <span class="gname">{@render mix('Group_2 [组]')}</span>
        <div class="itabs"><button class="on">{@render ic('props')}属性</button><button>{@render ic('infoTab')}信息</button><button>{@render ic('stetho')}诊断</button></div>
        <svg class="wins2" viewBox="0 0 62 16"><path d="M0 6h10v9H0z" fill="#fff" /><path d="M4 2h9v9" fill="none" stroke="#fff" stroke-width="2" /><path d="M24 3h12v11H24zM24 8h12M24 11h12" fill="none" stroke="#fff" stroke-width="1.500" /><path d="M46 4h15l-7 8z" fill="#fff" /></svg>
      </div>
      <div class="stabs"><button>属性</button><button>动画</button><button class="on">事件</button><button>文本</button></div>
      <div class="ibody">
        <div class="evs">
          {#each events as e}<div class="ev">
            {#if e.a}<i class="tri {e.a}"></i>{/if}
            <span class="et" class:sub={e.sub}>{#if e.fn}{@render ic('fn')}{/if}<span class:sel={e.sel} class:hot={e.hot}>{e.t}</span></span>
          </div>{/each}
        </div>
        <div class="vs evscroll">{@render chev('up')}<i class="thumb v"></i><i class="et3"></i>{@render chev('down')}</div>
        <div class="split"><span><i class="tri left"></i></span><span><i class="tri right"></i></span></div>
        <div class="fnarea">
          <div class="toolbar fn">
            {@render tool({ n: 'up' })}{@render tool({ n: 'down' })}<i class="sep"></i>{@render tool({ n: 'expand' })}{@render tool({ n: 'collapse' })}<i class="sep"></i>{@render tool({ n: 'x' })}
          </div>
          <table>
            <colgroup><col class="k0" /><col /><col /><col class="k3" /></colgroup>
            <thead><tr><th></th><th></th><th></th><th></th></tr></thead>
            <tbody>
              <tr><td></td><td colspan="2"><i class="tri down"></i>置位位</td><td></td></tr>
              <tr><td></td><td class="p2">变量 (输入/输出)</td><td>读输入数据_1层上呼梯按钮</td><td></td></tr>
              <tr><td></td><td colspan="2" class="p1">&lt;添加函数&gt;</td><td></td></tr>
              <tr><td></td><td></td><td></td><td></td></tr>
              <tr class="half"><td></td><td></td><td></td><td></td></tr>
            </tbody>
          </table>
          <div class="hs fnhs"><i class="edge"></i>{@render chev('left')}<i class="thumb h"></i>{@render chev('right')}</div>
        </div>
      </div>
    </main>

    <aside class="kit">
      <div class="phead grey">工具箱</div>
      <div class="opt">选项</div>
      <div class="rtools"><button aria-label="选择">{@render ic('cursor')}</button><button aria-label="图章">{@render ic('stamp')}</button><button aria-label="设置">{@render ic('options')}</button></div>
      {#each sections as s}
        <button class="sec"><span><i class="cv"></i></span>{s.t}</button>
        <div class="box {s.c}">{#each s.items as n}<button aria-label={n}><svg viewBox="0 0 36 36">{@html big[n]}</svg></button>{/each}</div>
      {/each}
      <button class="sec"><span><i class="cv r"></i></span>我的控件</button>
      <button class="sec"><span><i class="cv r"></i></span>图形</button>
    </aside>
  </div>

  <footer class="status">
    <button class="portal"><span>tal</span> <b>视图</b></button>
    {#each windows as w}<button class="win" class:on={w.on}>{@render ic(w.i)}<span>{w.t}</span>{#if w.m}<i></i>{/if}</button>{/each}
    <button class="savei" aria-label="保存">{@render ic('save')}</button>
    <div class="msg">{@render ic('ok')}<span>项目 单部3层电梯（1200与200smart...</span></div>
  </footer>
  <div class="band"></div>
  <div class="task">
    <i class="arc"></i>
    <button aria-label="Cortana"><i class="ring"></i></button>
    <button aria-label="任务视图"><svg viewBox="0 0 22 22"><path d="M3 1v3h10V1M3 7h10v8H3zM3 21v-3h10v3M19 1v7M19 13v8" fill="none" stroke="#111" stroke-width="1.500" /><path d="M17 9h4v3h-4z" /></svg></button>
    <button aria-label="Edge"><svg class="l" viewBox="0 0 28 28"><path d="M2 13C4 0 26-1 26 13c0 5-7 7-13 5 1 4 7 6 12 3C20 30 3 29 2 17z" fill="#1687d9" /><path d="M2 13C5 1 25 1 25 11c0 4-5 3-8 2-6-2-11 1-15 3z" fill="#2fc1ea" /><path d="M3 16c3-5 9-6 13-4 3 1 5 0 5-2 2 5-4 6-8 5-3 0-7 1-10 5z" fill="#e4f5fc" /></svg></button>
    <button class="u" aria-label="文件"><svg class="l" viewBox="0 0 28 28"><path d="M1 3h9l3 3h14v19H1z" fill="#f9c54b" /><path d="M1 3h10v4H1z" fill="#cf8a1c" /><path d="M4 26V16h20v10h-5v-5h-9v5z" fill="#3c86bf" /></svg></button>
    <button class="u act"><span class="tia">TIA<em>V15.1</em></span></button>
    <button class="u" aria-label="会议"><svg class="l" viewBox="0 0 28 28"><rect x="1" y="0" width="26" height="28" rx="5" fill="#0b6bfa" /><path d="M4 18l6-8 4 4 4-4 6 8c-3 2-5 0-6-2-2 3-4 4-6 2-3 3-6 3-8 0z" fill="#fff" /></svg></button>
    <button class="u"><span class="tia">VinC<em>RA</em></span></button>
    <button class="u" aria-label="记事本"><svg class="l" viewBox="0 0 28 28"><path d="M8 2h17l-6 20H2z" fill="#76b4c3" stroke="#d5e3e6" /><path d="M25 2l2 20-9 5 1-5z" fill="#f2efe3" stroke="#aaa" stroke-width=".6" /></svg></button>
    <button class="u" aria-label="录屏"><svg class="l" viewBox="0 0 28 28"><rect width="28" height="28" rx="3" fill="#129a68" /><circle cx="15" cy="16" r="6" fill="none" stroke="#fff" stroke-width="4.500" /><path d="M4 5h2v2H4zM8 3h2v2H8zM5 9h3v3H5zM10 7h3v2h-3z" fill="#fff" /></svg></button>
    <button class="u" aria-label="梯形图"><svg class="l" viewBox="0 0 28 28"><rect x="1" y="1" width="26" height="23" fill="#f3f8ff" stroke="#3468b8" /><path d="M1 3h26" stroke="#3f7bd0" stroke-width="3" /><path d="M3 10h4m2 0h5m2 0h6M7 7v6M9 7v6M14 7v6M16 7v6M3 18h5" stroke="#25458a" stroke-width="1.500" /><path d="M13 18h12v9H13z" fill="#6b7a60" stroke="#222" /></svg></button>
    <div class="tray">
      <svg class="plug" viewBox="0 0 12 24"><path d="M4 0v5M8 0v5" stroke="#333" stroke-width="2.500" /><path d="M1 5h10v7q0 4-5 4-5 0-5-4z" fill="#fff" stroke="#555" /><path d="M6 16v7" stroke="#555" stroke-width="3" /></svg>
      <span class="bat">98%</span>
      <svg viewBox="0 0 20 20"><path d="M3 14l7-8 7 8" fill="none" stroke="#111" stroke-width="1.500" /></svg>
      <svg viewBox="0 0 20 20"><rect x="7" y="0" width="6" height="14" rx="2" /><path d="M5 11q0 5 5 5t5-5M10 16v3M6 19h8" fill="none" stroke="#111" stroke-width="1.500" /></svg>
      <svg viewBox="0 0 20 20"><path d="M13 2l5-1v10M8 3H3v14l7 1M7 8q3-3 6 0M13 8V5M13 11q-3 3-6 0M7 11v3" fill="none" stroke="#111" stroke-width="1.400" /><circle cx="15" cy="15" r="4.500" fill="#f2931e" /></svg>
      <svg viewBox="0 0 20 20"><path d="M6 6h13v10H6z" /><path d="M2 3v4m4-4v4M1 7h6M4 8v5h3" fill="none" stroke="#111" stroke-width="2" /></svg>
      <svg viewBox="0 0 20 20"><path d="M1 7h3l5-5v15l-5-5H1zM12 6q2 4 0 8M15 4q3 6 0 11M18 2q3 8 0 15" fill="none" stroke="#111" stroke-width="1.300" /></svg>
      <svg viewBox="0 0 20 20"><path d="M2 17C2 9 8 3 17 3M6 17C6 11 10 7 17 7M10 17c0-3 3-6 7-6" fill="none" stroke="#555" stroke-width="1.600" /><circle cx="15" cy="16" r="2" /></svg>
      <span class="ime">英</span><span class="py"><b>拼</b></span>
      <span class="clock"><span>9:38</span><span>2022/10/31</span></span>
      <i class="arc r"></i>
    </div>
  </div>

  <div class="meet"><svg viewBox="0 0 56 30"><path d="M0 19L17 2l10 9-17 17q-12-1-10-9z" fill="#484c51" /><path d="M18 21L35 3l20 18q-3 9-10 6l-9-8-9 9q-7 0-9-7z" fill="#575b60" /></svg></div>
  <div class="rec"><span>00:21:44</span><div><button aria-label="停止"><i class="sq"></i></button><button aria-label="暂停"><i class="pa"></i></button></div></div>
</div>

<style>
  :global(body) { background: #ccc; }
  * { box-sizing: border-box; }
  i { font-style: normal; }
  button { border: 0; padding: 0; margin: 0; background: none; font: inherit; color: inherit; }
  input, select { font: inherit; color: inherit; border: 0; padding: 0; margin: 0; background: none; border-radius: 0; }
  .defs { position: absolute; }
  .app { position: relative; display: flex; flex-direction: column; height: 100vh; min-height: 1000px; overflow: hidden; background: #cbcbcb; font-family: "Noto Sans", "Noto Sans CJK SC", sans-serif; font-size: 15px; line-height: 20px; color: #111; white-space: nowrap; }
  .ic { width: 20px; height: 20px; flex: none; display: block; }
  .pm { width: 10px; height: 14px; flex: none; }
  .tri { display: block; flex: none; width: 0; height: 0; border: 5px solid transparent; }
  .tri.right { border-left: 6px solid currentColor; border-right: 0; }
  .tri.left { border-right: 6px solid currentColor; border-left: 0; }
  .tri.down { border-top: 6px solid currentColor; border-bottom: 0; }

  .title { flex: none; height: 29px; padding: 4px 0 0 208px; font-size: 17px; color: #eee; background: linear-gradient(#8a8a8a, #6e6e6e 8px, #1d1d1d 9px); border-bottom: 1px solid #333; }
  .title b { font-size: 18px; }
  .top { flex: none; height: 63px; display: flex; background: linear-gradient(#d0d0d0, #c9c9c9); border-bottom: 1px solid #444c5c; }
  .bars { flex: 1; min-width: 0; }
  .menu { display: flex; gap: 22px; height: 29px; padding-top: 6px; margin-left: -8px; }
  .menu button { height: 20px; }
  .menu small { font-size: 14px; color: #333; }
  .brand { width: 211px; overflow: hidden; padding-top: 17px; font-size: 18px; line-height: 19px; }
  .brand strong { display: block; padding-left: 197px; color: #777; }
  .toolbar { display: flex; align-items: center; }
  .main { height: 33px; padding-left: 5px; }
  .sep { flex: none; width: 1px; height: 28px; margin: 0 2px; border-left: 1px dotted #999; }
  .tool { flex: none; width: 30px; height: 30px; display: flex; align-items: center; justify-content: center; }
  .tool.pair { width: 44px; gap: 5px; }
  .tool.wide { width: auto; gap: 8px; padding: 0 6px; }
  .tool.wide:first-child { padding: 0 9px 0 0; }
  .tool.off { color: #858585; }
  .wide { font-size: 16px; }
  .search { width: 150px; height: 24px; margin: 0 6px 0 8px; padding: 0 3px; border: 2px solid #999; background: #fff; font-size: 15px; }
  .search::placeholder { color: #777; opacity: 1; }

  .work { flex: 1; min-height: 0; display: grid; grid-template-columns: 206px minmax(0, 1fr) 91px; column-gap: 4px; background: #20283c; }
  .side, .editor, .kit { min-width: 0; min-height: 0; display: flex; flex-direction: column; overflow: hidden; background: #ebebeb; }
  .phead { flex: none; height: 30px; display: flex; align-items: center; font-size: 17px; color: #fff; }
  .grey { background: #afafaf; }
  .navy { background: #2d3650; padding: 0 7px 0 5px; }
  .side .phead { justify-content: flex-end; padding-right: 9px; }
  .pins { width: 34px; height: 16px; }
  .orange { flex: none; height: 4px; background: #f29a22; }
  .tabgap { flex: none; height: 31px; background: #cbcbcb; border-bottom: 1px solid #8b8b8b; padding-top: 4px; }
  .ltab { width: 19px; height: 27px; border: 1px solid #8b8b8b; border-width: 1px 1px 0 0; background: linear-gradient(#fafafa, #ececec); }
  .ltools { flex: none; height: 34px; display: flex; align-items: center; justify-content: flex-end; padding-right: 6px; background: #ececec; }
  .lgap { flex: none; height: 27px; background: #c1c1c1; }
  .lhead { flex: none; height: 24px; display: grid; grid-template-columns: 135px 25px 24px 1fr; background: linear-gradient(#ededed, #d3d3d3 50%, #e8e8e8); border-bottom: 1px solid #aaa; }
  .lhead i { border-right: 1px solid #bbb; }
  .tree { flex: 1; min-height: 0; display: flex; }
  .view { flex: 1; overflow: hidden; }
  .rows { height: 714px; display: grid; grid-template-rows: repeat(30, 1fr); }
  .row { display: grid; grid-template-columns: 135px 25px 1fr; border-bottom: 2px solid #fff; background: #efefef; min-height: 0; }
  .row.grp { background: #e0e0e0; }
  .name { position: relative; display: flex; align-items: center; gap: 5px; padding-left: 2px; border-right: 1px solid #ccc; overflow: hidden; }
  .name.in { padding-left: 25px; }
  .name.bare { padding-left: 5px; }
  .name .tri { position: absolute; left: 10px; }
  .c { display: flex; align-items: center; justify-content: center; border-right: 1px solid #fff; }
  .dot { width: 16px; height: 16px; border-radius: 50%; background: radial-gradient(#1fb355, #12913b); }
  .vs { flex: none; width: 23px; display: flex; flex-direction: column; background: #c1c1c1; padding: 1px; }
  .sb { flex: none; width: 21px; height: 22px; border: 1px solid #8e8e8e; background: #e9e9e9; display: flex; align-items: center; justify-content: center; }
  .sb svg { width: 14px; height: 14px; fill: none; stroke: #555; stroke-width: 2.500; }
  .sb.down svg { transform: rotate(180deg); }
  .sb.right svg { transform: rotate(90deg); }
  .sb.left svg { transform: rotate(-90deg); }
  .thumb { display: flex; align-items: center; justify-content: center; border: 1px solid #8e8e8e; background: linear-gradient(90deg, #ececec, #d3d3d3); }
  .thumb.h { background: linear-gradient(#ececec, #d0d0d0); }
  .thumb::after { content: ""; width: 10px; height: 9px; background: repeating-linear-gradient(#666 0 1px, transparent 1px 3px); }
  .thumb.h::after { background: repeating-linear-gradient(90deg, #666 0 1px, transparent 1px 3px); }
  .lt1 { flex: 104; }
  .side .thumb.v { flex: 199; }
  .lt3 { flex: 351; }
  .hs { flex: none; height: 22px; display: flex; background: #c1c1c1; }
  .lefths .thumb { flex: 0 0 140px; }
  .lefths .thumb::after { margin-left: -40px; }
  .lefths .sb { margin-left: 22px; }
  .detail { flex: none; height: 30px; border-top: 4px solid #2a3246; background: linear-gradient(#f2f2f2, #d5d5d5); text-align: left; font-size: 18px; font-weight: 700; text-indent: -14px; }

  .crumb { flex: none; }
  .crumb b { font-size: 19px; }
  .navy .tri { margin: 0 12px 0 14px; }
  .wins { width: 76px; height: 16px; margin-left: auto; flex: none; }
  .strip { flex: none; height: 35px; border-top: 4px solid #f0f0f0; border-bottom: 1px solid #8b8b8b; background: #cbcbcb; }
  .fmt { flex: none; height: 34px; padding-left: 7px; background: #ececec; }
  .font { display: flex; width: 140px; height: 22px; border: 1px solid #777; background: #fff; }
  .font input { flex: 1; min-width: 0; background: #fff; }
  .font button { width: 20px; border-left: 1px solid #999; display: flex; align-items: center; background: #dbe3f6; }
  .pick { position: relative; display: flex; border: 1px solid #777; background: #fff; height: 22px; }
  .pick select { appearance: none; flex: 1; min-width: 0; padding-left: 4px; line-height: 18px; }
  .pick span { pointer-events: none; position: absolute; right: 0; top: 0; bottom: 0; width: 19px; border-left: 1px solid #888; background: #dcdcdc; display: flex; align-items: center; justify-content: center; }
  .size { width: 48px; margin: 0 7px 0 10px; }
  .let { font-size: 18px; font-weight: 600; color: #555; }
  .it { font-style: italic; font-family: "Liberation Serif", serif; font-size: 20px; }
  .un { text-decoration: underline; font-weight: 400; }
  .st { text-decoration: line-through; font-weight: 400; }
  .stage { flex: 1; min-height: 0; display: flex; }
  .canvas { flex: 1; min-width: 0; overflow: hidden; background: #d9d9d9; }
  .dots { position: relative; width: 1280px; height: 445px; overflow: hidden; background: radial-gradient(circle at 1px 1px, #666 1px, transparent 1px) 0 4px / 10px 10px #b5b5b5; }
  .panel { position: absolute; background: #d9d9d9; border: 1px solid #1d2233; }
  .hk { position: absolute; border: 2px solid #4b4d5a; border-radius: 4px; background: linear-gradient(#7c7e8a, #626672 20%, #626672 75%, #565966); color: #fff; font-family: "Liberation Serif", "Noto Sans CJK SC", serif; }
  .xl { font-size: 33px; }
  .lg { font-size: 33px; }
  .md { font-size: 30px; }
  .sm { font-size: 26px; }
  .lb { position: absolute; font-size: 40px; line-height: 48px; font-family: "Noto Sans CJK SC", sans-serif; }
  .ink { color: #31344a; }
  .yellow { color: #f7ef1c; }
  .pink { color: #f92cf0; }
  .hd { position: absolute; width: 7px; height: 7px; background: #a9d6ff; border: 1px solid #2f74c0; }
  .mouse { position: absolute; left: 595px; top: 125px; width: 12px; height: 20px; }
  .fkeys { display: flex; gap: 10px; padding: 13px 0 0 45px; }
  .fkeys button { flex: none; width: 90px; height: 60px; padding: 0 0 0 13px; text-align: left; font: 700 28px/48px "Liberation Sans", sans-serif; color: #000; background: #828282; border: 6px solid; border-color: #fff #000 #000 #fff; outline: 1px solid #222; outline-offset: -1px; }
  .stage .vs { width: 22px; padding: 1px 0 0 1px; }
  .ct1 { flex: 200; }
  .stage .thumb { flex: 194; }
  .ct3 { flex: 63; }
  .zoomrow { flex: none; height: 28px; display: flex; justify-content: flex-end; background: #e3e3e3; border-bottom: 4px solid #20283c; }
  .pct { width: 194px; height: 23px; font-size: 14px; }
  .slide { width: 84px; margin: 0 18px 0 23px; }
  .slide input { display: block; width: 84px; height: 16px; appearance: none; background: linear-gradient(#888, #888) 0 8px / 100% 1px no-repeat; }
  .slide input::-webkit-slider-thumb { appearance: none; width: 10px; height: 13px; background: #aaa; border: 1px solid #666; clip-path: polygon(0 0, 100% 0, 100% 60%, 50% 100%, 0 60%); }
  .slide i { display: block; height: 4px; background: repeating-linear-gradient(90deg, #444 0 2px, transparent 2px 6px); }
  .fit { width: 20px; background: #fff; margin-right: 1px; }
  .fit svg { width: 18px; height: 18px; display: block; }
  .insp { height: 33px; background: #afafaf; border-bottom: 3px solid #343d55; padding: 0 5px 0 6px; }
  .gname { flex: 1; }
  .gname b { font-size: 19px; }
  .itabs { align-self: stretch; display: flex; gap: 2px; padding-top: 4px; margin-bottom: -3px; }
  .itabs button { width: 93px; height: 26px; display: flex; align-items: center; gap: 3px; padding-left: 2px; font-size: 18px; color: #555; border: 1px solid #999; border-bottom: 0; background: linear-gradient(#e0e0e0, #c6c6c6); }
  .itabs .on { height: 29px; color: #000; font-weight: 700; background: #ececec; border-top: 2px solid #20283c; }
  .wins2 { width: 64px; height: 16px; margin: 0 0 0 25px; }
  .stabs { flex: none; height: 31px; display: flex; gap: 2px; padding: 3px 0 0 8px; background: #cbcbcb; border-bottom: 1px solid #8b8b8b; }
  .stabs button { width: 78px; height: 27px; padding-right: 12px; font-size: 18px; color: #555; border: 1px solid #999; border-bottom: 0; background: linear-gradient(#e2e2e2, #cdcdcd); }
  .stabs .on { height: 28px; font-weight: 700; color: #000; background: linear-gradient(#fafafa, #ececec); }
  .ibody { flex: none; height: 209px; display: flex; background: #ececec; overflow: hidden; }
  .evs { flex: none; width: 192px; height: 209px; padding-top: 42px; display: grid; grid-template-rows: repeat(7, 1fr); }
  .ev { position: relative; min-height: 0; display: flex; align-items: center; border-top: 1px solid #ddd; }
  .ev .tri { position: absolute; left: 9px; }
  .et { padding-left: 45px; display: flex; align-items: center; gap: 4px; }
  .et.sub { padding-left: 65px; }
  .et:has(.ic) { padding-left: 42px; }
  .sel { background: #2f66c2; color: #fff; font-weight: 700; outline: 1px dotted #c8a; }
  .hot { color: #0b12e0; font-weight: 700; }
  .evscroll { margin-top: 42px; width: 23px; }
  .evscroll .thumb { flex: 90; }
  .et3 { flex: 28; }
  .split { flex: none; width: 10px; margin: 4px 12px 0 2px; border: 1px solid #999; border-bottom: 0; background: #d6d6d6; padding-top: 64px; }
  .split span { display: flex; align-items: center; justify-content: center; height: 29px; margin-bottom: 13px; background: #c5c5c5; border-bottom: 1px solid #999; }
  .split .tri { border-top-width: 4px; border-bottom-width: 4px; }
  .fnarea { flex: 1; min-width: 0; padding: 4px 14px 0 0; }
  .fn { height: 32px; margin-bottom: 6px; margin-left: -7px; }
  .fn .sep { height: 29px; }
  table { width: 100%; table-layout: fixed; border-collapse: collapse; }
  .k0 { width: 29px; }
  .k3 { width: 23px; }
  th { height: 24px; padding: 0; background: linear-gradient(#ededed, #d0d0d0 50%, #e6e6e6); border: 1px solid #b5b5b5; border-left: 0; }
  td { height: 24px; padding: 0 4px; line-height: 20px; background: #efefef; border: 2px solid #fff; border-width: 0 1px 2px; }
  td:first-child { background: #c9c9c9; border-left: 0; }
  td .tri { display: inline-block; margin: 0 13px 1px 2px; vertical-align: middle; }
  td.p2 { padding-left: 50px; }
  td.p1 { padding-left: 28px; }
  .half td { height: 10px; }
  .fnhs { gap: 2px; background: #d6d6d6; }
  .edge { width: 28px; background: #c9c9c9; }
  .fnhs .thumb { flex: 1; }

  .kit .grey { padding-left: 6px; font-size: 19px; }
  .opt { flex: none; height: 35px; padding: 5px 6px; font-size: 18px; font-weight: 700; border-top: 4px solid #ddd; border-bottom: 1px solid #ccc; background: linear-gradient(#fafafa 40%, #e2e2e2); }
  .rtools { flex: none; height: 34px; display: flex; align-items: center; gap: 10px; padding-left: 7px; }
  .sec { flex: none; height: 30px; display: flex; align-items: center; gap: 5px; border-top: 3px solid #999; border-bottom: 1px solid #aaa; background: linear-gradient(#e9e9e9, #d3d3d3); font-size: 18px; font-weight: 700; }
  .sec span { flex: none; width: 26px; align-self: stretch; border-right: 1px solid #999; display: flex; align-items: center; justify-content: center; }
  .cv { width: 8px; height: 8px; border: solid #111; border-width: 0 3px 3px 0; transform: rotate(45deg); margin-top: -4px; }
  .cv.r { transform: rotate(-45deg); margin: 0; }
  .box { flex: none; display: grid; grid-template-columns: 36px 36px; column-gap: 17px; row-gap: 9px; align-content: start; padding: 8px 7px 0; background: #efefef; }
  .box svg { width: 36px; height: 36px; display: block; }
  .basic { height: 188px; }
  .elem { height: 188px; }
  .ctrl { flex: 1; }

  .status { flex: none; height: 37px; display: flex; align-items: flex-start; gap: 3px; padding-top: 5px; background: #1b1b1b; color: #fff; overflow: hidden; }
  .portal { width: 127px; text-align: left; font-size: 17px; line-height: 26px; }
  .win { flex: none; width: 142px; height: 25px; display: flex; align-items: center; gap: 6px; padding: 0 3px; background: #c3c3c3; color: #222; font-size: 15px; }
  .win.on { background: #fff; font-weight: 700; }
  .win i { margin: 8px 0 0 auto; border: 5px solid transparent; border-top: 0; border-bottom: 6px solid #111; }
  .savei { margin-left: auto; width: 26px; height: 25px; background: #d6d6d6; display: flex; align-items: center; justify-content: center; }
  .msg { width: 314px; height: 31px; margin: -3px 0 0 5px; padding-left: 4px; border-left: 1px solid #444; display: flex; align-items: center; gap: 5px; font-size: 15px; }
  .band { flex: none; height: 10px; background: linear-gradient(#c6c6c6, #aaa 6px, #fff 7px); }
  .task { flex: none; height: 40px; display: flex; background: #c9dde5; overflow: hidden; }
  .task > button { flex: none; width: 62px; display: flex; align-items: center; justify-content: center; padding-bottom: 8px; }
  .task svg { width: 22px; height: 22px; flex: none; }
  .task svg.l { width: 28px; height: 28px; }
  .u { background: linear-gradient(#0b9db4, #0b9db4) center bottom / 50px 3px no-repeat; }
  .act { background-color: #eef6fa; background-size: 62px 3px; }
  .arc { flex: none; width: 23px; height: 14px; margin-top: 8px; margin-left: -20px; margin-right: 20px; border: 2px solid #333; border-radius: 8px; }
  .arc.r { margin: 12px 0 0 14px; }
  .ring { width: 19px; height: 19px; border: 3px solid #111; border-radius: 50%; }
  .tia { width: 32px; height: 30px; overflow: hidden; background: #2b2e3f; color: #fff; font: 15px/15px "Roboto", sans-serif; text-align: center; }
  .tia em { display: block; font-size: 12px; font-style: normal; color: #a9b8df; }
  .tray { margin-left: auto; flex: none; display: flex; align-items: center; padding-bottom: 8px; width: 423px; overflow: hidden; }
  .tray > * { flex: none; }
  .tray svg { margin: 0 5px; width: 20px; height: 20px; }
  .tray .plug { width: 12px; height: 24px; margin: 0; }
  .bat { width: 42px; height: 22px; margin: 0 3px 0 2px; border: 2px solid #fff; outline: 1px solid #666; background: #178a3c; color: #fff; font-size: 12px; line-height: 18px; text-align: center; }
  .ime { width: 30px; font-size: 20px; text-align: center; }
  .py { width: 40px; display: flex; justify-content: center; }
  .py b { width: 20px; height: 20px; border: 1px solid #333; background: #f4f9fb; font-size: 14px; font-weight: 400; line-height: 18px; text-align: center; }
  .clock { width: 97px; display: flex; flex-direction: column; text-align: center; font: 16px/22px "Open Sans", sans-serif; }

  .meet { position: absolute; left: 0; top: 4px; width: 210px; height: 45px; background: #2c2f33; }
  .meet svg { position: absolute; left: 138px; top: 8px; width: 56px; height: 30px; }
  .rec { position: absolute; left: 756px; bottom: 0; width: 216px; height: 48px; display: flex; align-items: center; background: #2a2e30; color: #fff; font: 22px/48px "Roboto", sans-serif; }
  .rec > span { width: 121px; text-align: center; }
  .rec div { flex: 1; align-self: stretch; display: flex; justify-content: space-around; background: #0f1213; }
  .sq { display: block; width: 20px; height: 20px; background: #aeaeae; }
  .pa { display: block; width: 20px; height: 20px; border: solid #aeaeae; border-width: 0 7px; }
</style>
